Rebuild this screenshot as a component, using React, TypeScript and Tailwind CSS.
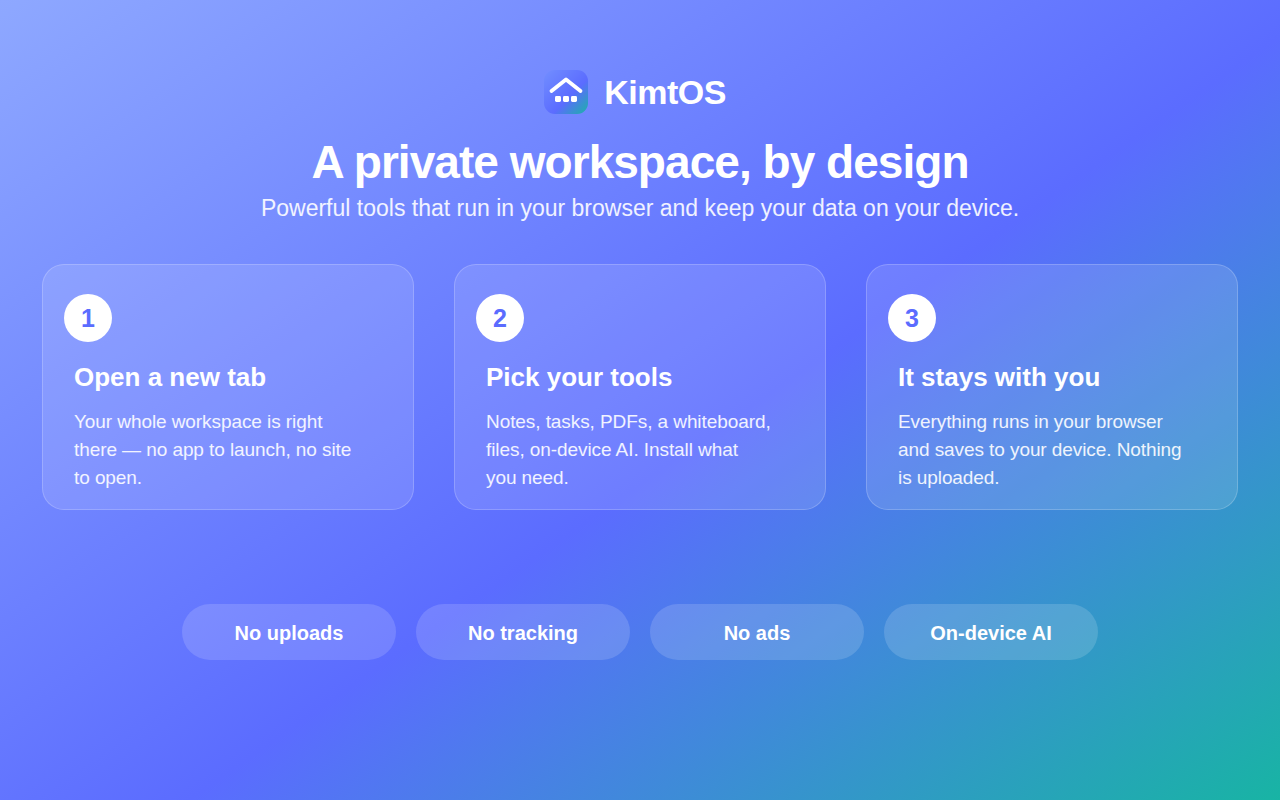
const steps = [
  { n: '1', title: 'Open a new tab', lines: ['Your whole workspace is right', 'there — no app to launch, no site', 'to open.'] },
  { n: '2', title: 'Pick your tools', lines: ['Notes, tasks, PDFs, a whiteboard,', 'files, on-device AI. Install what', 'you need.'] },
  { n: '3', title: 'It stays with you', lines: ['Everything runs in your browser', 'and saves to your device. Nothing', 'is uploaded.'] },
];

const pills = ['No uploads', 'No tracking', 'No ads', 'On-device AI'];

function Logo() {
  return (
    <svg width="44" height="44" viewBox="0 0 44 44" fill="none">
      <defs>
        <linearGradient id="logo-bg" x1="0" y1="0" x2="44" y2="44" gradientUnits="userSpaceOnUse">
          <stop offset="0" stopColor="#728eff" />
          <stop offset="0.6" stopColor="#5b6cff" />
          <stop offset="1" stopColor="#1ab3a6" />
        </linearGradient>
      </defs>
      <rect width="44" height="44" rx="11" fill="url(#logo-bg)" />
      <path d="M7.5 21 22 9.5 36.5 21" stroke="#fff" strokeWidth="3.8" strokeLinecap="round" strokeLinejoin="round" />
      <rect x="11" y="26" width="6" height="6" rx="1.4" fill="#fff" />
      <rect x="19" y="26" width="6" height="6" rx="1.4" fill="#fff" />
      <rect x="27" y="26" width="6" height="6" rx="1.4" fill="#fff" />
    </svg>
  );
}

export default function App() {
  return (
    <div className="w-full h-screen overflow-hidden flex flex-col items-center pt-[70px] text-white font-['Liberation_Sans',sans-serif] bg-[linear-gradient(145deg,#8ea8ff_0%,#5b6cff_55%,#18b4a4_100%)]">
      <div className="flex items-center gap-4 h-11 mr-[10px]">
        <Logo />
        <span className="text-[34px] font-bold tracking-[-0.5px]">KimtOS</span>
      </div>
      <h1 className="mt-5 text-[46px] leading-[56px] font-bold tracking-[-0.96px]">A private workspace, by design</h1>
      <p className="mt-[3px] text-[23px] leading-[30px] text-white/90">Powerful tools that run in your browser and keep your data on your device.</p>
      <div className="mt-[41px] w-full px-[42px] grid grid-cols-3 gap-10">
        {steps.map(step => (
          <div key={step.n} className="h-[246px] rounded-[22px] border border-white/20 bg-white/12 pt-[29px] pl-[21px]">
            <div className="w-12 h-12 pt-0.5 rounded-full bg-white flex items-center justify-center text-[25px] font-bold text-[#5b6cff]">{step.n}</div>
            <h2 className="mt-[17px] ml-2.5 text-[26px] leading-[36px] font-bold">{step.title}</h2>
            <p className="mt-[13px] ml-2.5 text-[19px] leading-[28px] tracking-[-0.08px] text-white/90">
              {step.lines.map(line => <span key={line} className="block whitespace-nowrap">{line}</span>)}
            </p>
          </div>
        ))}
      </div>
      <div className="mt-[94px] flex gap-5">
        {pills.map(pill => (
          <div key={pill} className="w-[214px] h-14 pt-0.5 rounded-full bg-white/15 flex items-center justify-center text-[20px] font-bold">{pill}</div>
        ))}
      </div>
    </div>
  );
}
